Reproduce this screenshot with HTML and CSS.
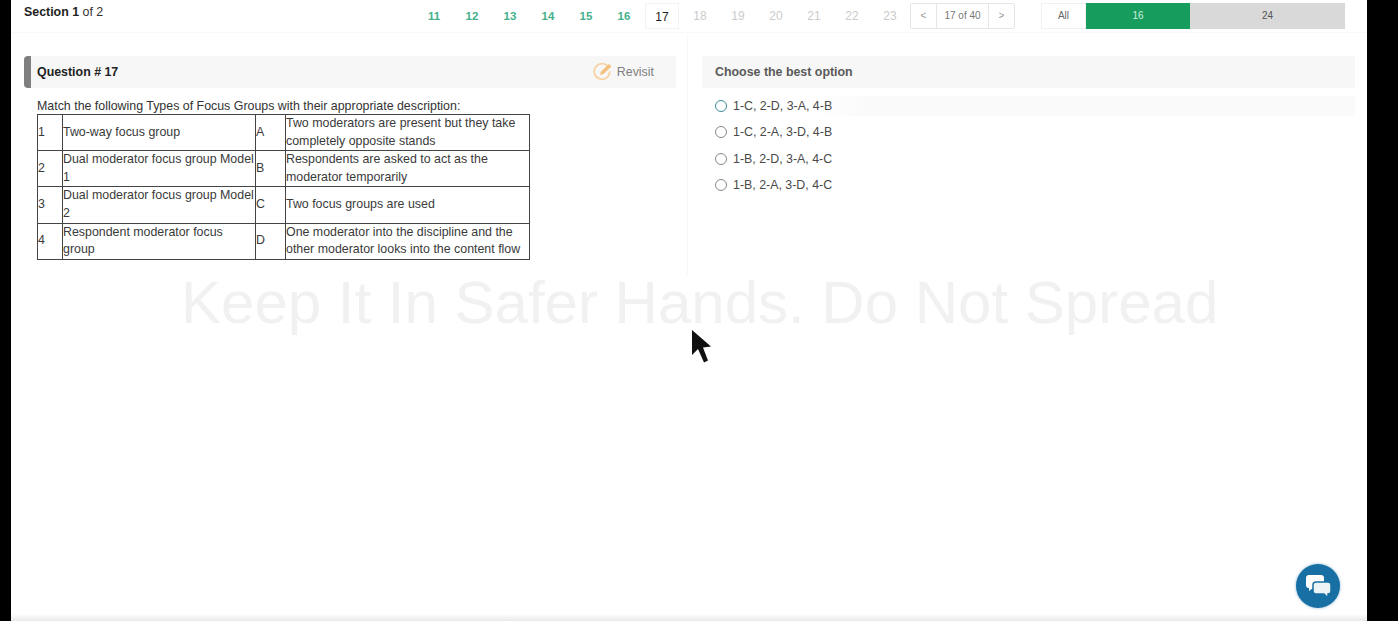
FILE: index.html
```html
<!DOCTYPE html>
<html lang="en">
<head>
    <meta charset="UTF-8">
    <meta name="viewport" content="width=device-width, initial-scale=1.0">
    <title>Section 1 of 2</title>

    <link rel="stylesheet" href="styles.css">
</head>
<body>

    <div class="screen">
        <div class="topbar">
            <div class="section-label"><b>Section 1</b> of 2</div>
            <div class="numbers">
                <span class="num done">11</span>
                <span class="num done">12</span>
                <span class="num done">13</span>
                <span class="num done">14</span>
                <span class="num done">15</span>
                <span class="num done">16</span>
                <span class="num current">17</span>
                <span class="num">18</span>
                <span class="num">19</span>
                <span class="num">20</span>
                <span class="num">21</span>
                <span class="num">22</span>
                <span class="num">23</span>
            </div>
            <div class="pager">
                <span class="pager-arrow">&lt;</span>
                <span class="pager-count">17 of 40</span>
                <span class="pager-arrow">&gt;</span>
            </div>
            <div class="tabs">
                <span class="tab tab-all">All</span>
                <span class="tab tab-green">16</span>
                <span class="tab tab-grey">24</span>
            </div>
        </div>

        <div class="content">
            <div class="left">
                <div class="head head-question">
                    <span class="question-no">Question # 17</span>
                    <span class="revisit">
                        <svg class="revisit-icon" width="20" height="18" viewBox="0 0 20 18">
                            <path d="M15 3.500A7.800 7.800 0 1 0 16.800 8.500" fill="none" stroke="#f7d3a4" stroke-width="1.800"/>
                            <path d="M7 12l1-3.500L16 1l2.500 2.500L10.500 11Z" fill="#f5c07c"/>
                        </svg>
                        Revisit
                    </span>
                </div>
                <p class="question-text">Match the following Types of Focus Groups with their appropriate description:</p>
                <table class="match">
                    <tr>
                        <td class="c1">1</td>
                        <td class="c2">Two-way focus group</td>
                        <td class="c3">A</td>
                        <td class="c4">Two moderators are present but they take completely opposite stands</td>
                    </tr>
                    <tr>
                        <td class="c1">2</td>
                        <td class="c2">Dual moderator focus group Model 1</td>
                        <td class="c3">B</td>
                        <td class="c4">Respondents are asked to act as the moderator temporarily</td>
                    </tr>
                    <tr>
                        <td class="c1">3</td>
                        <td class="c2">Dual moderator focus group Model 2</td>
                        <td class="c3">C</td>
                        <td class="c4">Two focus groups are used</td>
                    </tr>
                    <tr>
                        <td class="c1">4</td>
                        <td class="c2">Respondent moderator focus group</td>
                        <td class="c3">D</td>
                        <td class="c4">One moderator into the discipline and the other moderator looks into the content flow</td>
                    </tr>
                </table>
            </div>
            <div class="right">
                <div class="head head-choose">Choose the best option</div>
                <div class="options">
                    <div class="option option-hover"><span class="radio radio-first"></span>1-C, 2-D, 3-A, 4-B</div>
                    <div class="option"><span class="radio"></span>1-C, 2-A, 3-D, 4-B</div>
                    <div class="option"><span class="radio"></span>1-B, 2-D, 3-A, 4-C</div>
                    <div class="option"><span class="radio"></span>1-B, 2-A, 3-D, 4-C</div>
                </div>
            </div>
        </div>

        <div class="watermark">Keep It In Safer Hands. Do Not Spread</div>

        <svg class="cursor" width="22" height="36" viewBox="0 0 22 36">
            <path d="M1 1L1 26L7 20L13 33.500L17 31.500L12 18.500L20 17.500Z" fill="#111"/>
        </svg>

        <div class="chat">
            <svg width="25" height="23" viewBox="0 0 25 23">
                <path d="M3 0h12a3 3 0 0 1 3 3v7a3 3 0 0 1-3 3H7l-4 3v-3a3 3 0 0 1-3-3V3a3 3 0 0 1 3-3z" fill="#fff"/>
                <path d="M10 7h12a3 3 0 0 1 3 3v6a3 3 0 0 1-3 3v4l-4-4h-8a3 3 0 0 1-3-3v-6a3 3 0 0 1 3-3z" fill="#eef3f6" stroke="#176fa3" stroke-width="1.500"/>
            </svg>
        </div>
        <div class="bottom-fade"></div>
    </div>

</body>
</html>
```

FILE: styles.css
```css
html, body {
    margin: 0;
    padding: 0;
    height: 100vh;
    overflow: hidden;
    background-color: black;
    font-family: "Liberation Sans", Arial, sans-serif;
}

.screen {
    position: relative;
    margin-left: 11px;
    width: 1356px;
    height: 621px;
    background-color: white;
    overflow: hidden;
}

.topbar {
    display: flex;
    align-items: flex-start;
    height: 33px;
    border-bottom: 1px solid #f9f9f9;
    padding-top: 3px;
    box-sizing: border-box;
}

.section-label {
    width: 391px;
    margin-left: 13px;
    padding-top: 1px;
    font-size: 12.400px;
    line-height: 17px;
    color: #333;
}

.section-label b {
    font-weight: bold;
    color: #222;
}

.numbers {
    display: flex;
    flex: none;
    width: 495px;
}

.num {
    flex: none;
    width: 38px;
    height: 26px;
    line-height: 26px;
    text-align: center;
    font-size: 12px;
    color: #cbcbcb;
    box-sizing: border-box;
}

.num.done {
    color: #45b08c;
    font-weight: bold;
    font-size: 11.500px;
}

.num.current {
    width: 34px;
    margin: 0 2px;
    color: #222;
    border: 1px solid #f2f2f2;
}

.pager {
    display: flex;
    flex: none;
    height: 26px;
    width: 105px;
    box-sizing: border-box;
    border: 1px solid #e6e6e6;
    border-radius: 2px;
    line-height: 24px;
    font-size: 10px;
    color: #777;
    text-align: center;
}

.pager-arrow {
    width: 25px;
    color: #999;
}

.pager-count {
    flex: 1;
    border-left: 1px solid #e6e6e6;
    border-right: 1px solid #e6e6e6;
}

.tabs {
    display: flex;
    margin-left: 26px;
    height: 26px;
    line-height: 26px;
    font-size: 10px;
    text-align: center;
}

.tab-all {
    width: 45px;
    box-sizing: border-box;
    border: 1px solid #f0f0f0;
    color: #666;
    line-height: 24px;
}

.tab-green {
    width: 104px;
    background-color: #169c5d;
    color: #cfeede;
}

.tab-grey {
    width: 155px;
    background-color: #d9d9d9;
    color: #555;
}

.content {
    display: flex;
    padding-top: 23px;
    margin-left: 13px;
}

.left {
    width: 652px;
    margin-right: 14px;
    padding-right: 11px;
    border-right: 1px solid #f8f8f8;
    height: 220px;
    margin-top: -21px;
    padding-top: 21px;
}

.right {
    width: 653px;
}

.head {
    display: flex;
    align-items: center;
    height: 32px;
    background-color: #f7f7f7;
    font-size: 12.400px;
    font-weight: bold;
    box-sizing: border-box;
}

.head-question {
    justify-content: space-between;
    border-left: 7px solid #808080;
    border-radius: 4px 0 0 4px;
    padding-left: 6px;
    padding-right: 22px;
    color: #222;
}

.revisit {
    display: flex;
    align-items: center;
    gap: 4px;
    font-weight: normal;
    color: #808080;
}

.head-choose {
    padding-left: 13px;
    color: #5a5a5a;
}

.question-text {
    margin: 10px 0 0 13px;
    font-size: 12.400px;
    line-height: 16px;
    color: #333;
}

.match {
    margin-left: 13px;
    width: 493px;
    border-collapse: collapse;
    table-layout: fixed;
    font-size: 12.400px;
    line-height: 17.600px;
    color: #3a3a3a;
}

.match td {
    border: 1px solid #444;
    padding: 0;
}

.c1 {
    width: 24px;
}

.c2 {
    width: 192px;
}

.c3 {
    width: 29px;
}

.options {
    padding-top: 4px;
}

.option {
    display: flex;
    align-items: center;
    height: 26.500px;
    padding-left: 13px;
    font-size: 12.400px;
    color: #4a4a4a;
}

.option-hover {
    height: 20px;
    margin-top: 4px;
    margin-bottom: 3px;
    background: linear-gradient(to right, white 18%, #fafafa 25%);
}

.radio {
    width: 10px;
    height: 10px;
    margin-right: 6px;
    border: 1px solid #888;
    border-radius: 50%;
}

.radio-first {
    border-color: #3a8a9a;
}

.watermark {
    position: absolute;
    left: 170px;
    top: 268px;
    font-size: 60px;
    line-height: 70px;
    white-space: nowrap;
    color: #f1f1f1;
}

.cursor {
    position: absolute;
    left: 680px;
    top: 329px;
}

.chat {
    position: absolute;
    left: 1285px;
    top: 564px;
    width: 44px;
    height: 44px;
    border-radius: 50%;
    background-color: #176fa3;
    box-shadow: 0 0 3px rgba(23, 111, 163, 0.5);
    display: flex;
    align-items: center;
    justify-content: center;
}

.bottom-fade {
    position: absolute;
    left: 0;
    right: 0;
    bottom: 0;
    height: 7px;
    background: linear-gradient(to bottom, white, #e8e8e8);
}
```
